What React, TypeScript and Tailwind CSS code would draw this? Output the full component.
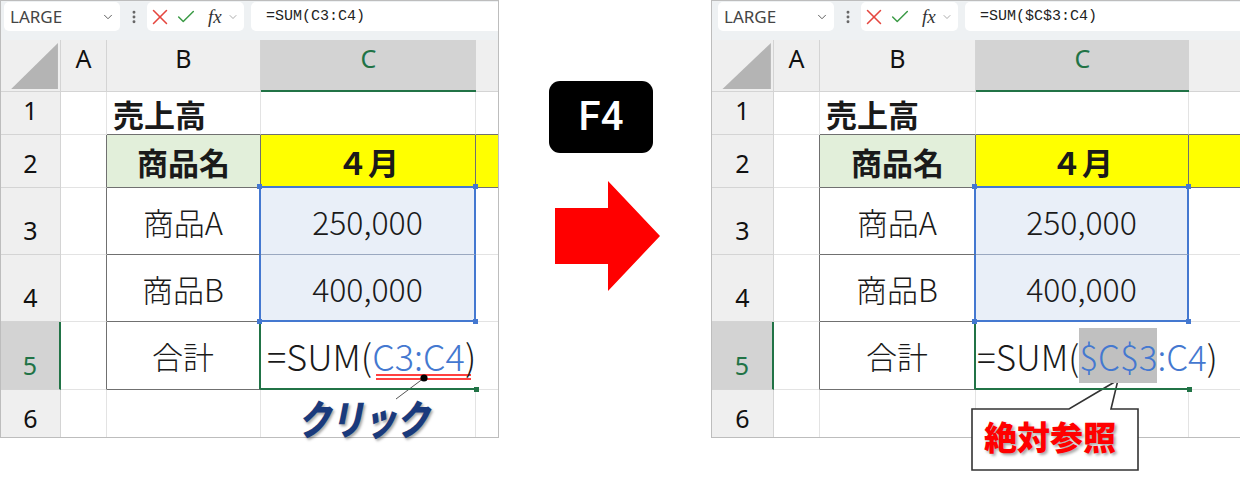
import type { ReactNode } from 'react'
import { X, Check, ChevronDown, EllipsisVertical } from 'lucide-react'

const jp = "font-['Noto_Sans_CJK_JP',sans-serif]"
const head = "font-['Noto_Sans',sans-serif]"

function FormulaBar({ formula, nameOffset }: { formula: string; nameOffset: string }) {
  return (
    <div className="h-[39px] bg-[#eef1f3] flex items-start pt-[1px]">
      <div className={`${nameOffset} w-[116px] h-[29px] bg-white rounded-[5px] flex items-center justify-between pl-[6px] pr-[5px]`}>
        <span className={`${head} text-[17px] text-[#444] leading-none`}>LARGE</span>
        <ChevronDown size={14} strokeWidth={1.6} color="#555" />
      </div>
      <div className="w-[27px] h-[29px] flex items-center justify-center">
        <EllipsisVertical size={16} strokeWidth={2.4} color="#666" />
      </div>
      <div className="w-[97px] h-[29px] bg-white rounded-[5px] flex items-center">
        <X size={26} strokeWidth={1.4} color="#e5463f" />
        <Check size={22} strokeWidth={1.6} color="#3a9a45" className="ml-[2px]" />
        <span className="ml-[11px] font-['Liberation_Serif',serif] italic text-[19px] text-[#333] leading-none">fx</span>
        <ChevronDown size={12} strokeWidth={1.4} color="#888" className="ml-[5px]" />
      </div>
      <div className="flex-1 ml-[7px] h-[29px] bg-white rounded-l-[5px] flex items-center pl-[15px]">
        <span className="font-['Liberation_Mono',monospace] text-[15px] text-[#222] leading-none">{formula}</span>
      </div>
    </div>
  )
}

function ColHead({ children, active }: { children: string; active?: boolean }) {
  return (
    <div
      className={
        active
          ? `${head} bg-[#d3d3d3] border-b-2 border-[#217346] flex justify-center pt-[6px] text-[25px] leading-none text-[#217346]`
          : `${head} bg-[#efefef] border-r border-b border-[#d4d4d4] flex justify-center pt-[6px] text-[25px] leading-none text-[#111]`
      }
    >
      {children}
    </div>
  )
}

function RowHead({ n, active, last }: { n: string; active?: boolean; last?: boolean }) {
  return (
    <div
      className={
        active
          ? `${head} bg-[#d3d3d3] border-r-2 border-r-[#217346] border-b border-b-[#d4d4d4] flex items-end justify-center pb-[11px] text-[25px] leading-none text-[#217346]`
          : last
            ? `${head} bg-[#efefef] border-r border-[#d4d4d4] flex items-end justify-center pb-[6px] text-[25px] leading-none text-[#111]`
            : `${head} bg-[#efefef] border-r border-b border-[#d4d4d4] flex items-end justify-center pb-[11px] text-[25px] leading-none text-[#111]`
      }
    >
      {n}
    </div>
  )
}

function Handle({ pos, green }: { pos: string; green?: boolean }) {
  return <span className={`absolute z-10 w-[5px] h-[5px] ${green ? 'bg-[#217346]' : 'bg-[#4478d0]'} ${pos}`} />
}

function Sheet({ cols, c5, c5Class }: { cols: string; c5: ReactNode; c5Class: string }) {
  const grid = 'border-r border-b border-[#e3e3e3]'
  const text = `${jp} text-[31px] leading-none text-[#1a1a1a] flex items-center`
  return (
    <div className={`grid ${cols} grid-rows-[52px_43px_53px_67px_67px_68px_47px]`}>
      {/* column headers */}
      <div className="bg-[#efefef] border-r border-b border-[#d4d4d4]">
        <svg viewBox="0 0 58 51" className="w-full h-full" preserveAspectRatio="none">
          <polygon points="10,49 56,3 56,49" fill="#b4b4b4" />
        </svg>
      </div>
      <ColHead>A</ColHead>
      <ColHead>B</ColHead>
      <ColHead active>C</ColHead>
      <div className="bg-[#efefef] border-b border-[#d4d4d4]" />

      {/* row 1 */}
      <RowHead n="1" />
      <div className={grid} />
      <div className={`${grid} border-b-[#707070] ${text} font-bold pl-[6px]`}>売上高</div>
      <div className={`${grid} border-b-[#707070]`} />
      <div className="border-b border-[#707070]" />

      {/* row 2 */}
      <RowHead n="2" />
      <div className={`${grid} border-r-[#707070]`} />
      <div className={`border-r border-b border-[#707070] bg-[#e2efda] ${text} justify-center font-bold`}>商品名</div>
      <div className={`border-r border-r-[#707070] border-b-2 border-b-[#4478d0] bg-[#ffff00] ${text} justify-center font-bold pt-[1px]`}>４月</div>
      <div className="border-b border-[#707070] border-l border-l-[#707070] -ml-px bg-[#ffff00]" />

      {/* row 3 */}
      <RowHead n="3" />
      <div className={`${grid} border-r-[#707070]`} />
      <div className={`border-r-2 border-r-[#4478d0] border-b border-b-[#707070] ${text} font-light justify-center`}>商品A</div>
      <div className={`relative border-r-2 border-r-[#4478d0] border-b border-b-[#9aa8c0] bg-[#e9eff8] ${text} font-light text-[32px] justify-center`}>
        <Handle pos="-top-[4px] -left-[4px]" />
        <Handle pos="-top-[4px] -right-[4px]" />
        250,000
      </div>
      <div className={`${grid} border-r-0`} />

      {/* row 4 */}
      <RowHead n="4" />
      <div className={`${grid} border-r-[#707070]`} />
      <div className={`border-r-2 border-r-[#4478d0] border-b border-b-[#707070] ${text} font-light justify-center`}>商品B</div>
      <div className={`relative border-r-2 border-r-[#4478d0] border-b-2 border-b-[#4478d0] bg-[#e9eff8] ${text} font-light text-[32px] justify-center`}>
        <Handle pos="-bottom-[4px] -left-[4px]" />
        <Handle pos="-bottom-[4px] -right-[4px]" />
        400,000
      </div>
      <div className={`${grid} border-r-0`} />

      {/* row 5 */}
      <RowHead n="5" active />
      <div className={`${grid} border-r-[#707070]`} />
      <div className={`border-r-2 border-r-[#217346] border-b border-b-[#707070] ${text} font-light justify-center`}>合計</div>
      <div className={`relative z-10 border-b-2 border-b-[#217346] ${text} font-light ${c5Class} whitespace-nowrap overflow-visible`}>
        <Handle pos="-bottom-[4px] -right-[3px]" green />
        {c5}
      </div>
      <div className={`${grid} border-r-0`} />

      {/* row 6 */}
      <RowHead n="6" last />
      <div className="border-r border-[#e3e3e3]" />
      <div className="border-r border-[#e3e3e3]" />
      <div className="border-r border-[#e3e3e3]" />
      <div />
    </div>
  )
}

export default function App() {
  return (
    <div className="w-[1240px] h-[482px] bg-white flex items-start overflow-hidden">
      {/* before */}
      <div className="relative w-[499px] border border-[#bdbdbd] bg-white">
        <FormulaBar formula="=SUM(C3:C4)" nameOffset="ml-[3px]" />
        <Sheet
          cols="grid-cols-[60px_46px_154px_215px_1fr]"
          c5Class="pl-[6px] text-[36px]"
          c5={
            <span>
              =SUM(<span className="text-[#4478d0]">C3:C4</span>)
            </span>
          }
        />
        <svg className="absolute left-[370px] top-[367px] w-[110px] h-[36px]" viewBox="0 0 110 36">
          <line x1="5" y1="7" x2="100" y2="7" stroke="#ff0000" strokeWidth="1.6" />
          <line x1="5" y1="11" x2="100" y2="11" stroke="#ff0000" strokeWidth="1.6" />
          <line x1="53" y1="10" x2="25" y2="31" stroke="#555" strokeWidth="1" />
          <circle cx="53" cy="10" r="3.6" fill="#000" />
        </svg>
        <div className={`absolute left-[297px] top-[396px] origin-left scale-x-[0.8] ${jp} font-black italic text-[41px] leading-none text-[#1a3a7c] [text-shadow:2px_2px_3px_rgba(0,0,0,0.35)]`}>
          クリック
        </div>
      </div>

      {/* F4 + arrow */}
      <div className="w-[212px] flex flex-col items-start pt-[81px]">
        <div className="ml-[50px] w-[104px] h-[72px] bg-black rounded-[11px] flex items-center justify-center">
          <span className="font-['Roboto',sans-serif] font-medium text-[40px] leading-none text-white">F4</span>
        </div>
        <svg className="ml-[56px] mt-[28px]" width="105" height="110" viewBox="0 0 105 110">
          <polygon points="0,27 53,27 53,0 105,55 53,110 53,83 0,83" fill="#ff0000" />
        </svg>
      </div>

      {/* after */}
      <div className="relative w-[529px] border border-[#bdbdbd] border-r-0 bg-white">
        <FormulaBar formula="=SUM($C$3:C4)" nameOffset="ml-[6px]" />
        <Sheet
          cols="grid-cols-[62px_46px_156px_213px_1fr]"
          c5Class="pl-[1px] text-[35px]"
          c5={
            <span>
              =SUM(<span className="bg-[#c0c0c0] text-[#4478d0] py-[2px]">$C$3</span>
              <span className="text-[#4478d0]">:C4</span>)
            </span>
          }
        />
        <svg className="absolute left-[259px] top-[377px] w-[170px] h-[95px]" viewBox="0 0 170 95">
          <path d="M1 31 L98 31 L147 2 L140 31 L167 31 L167 92 L1 92 Z" fill="#fff" stroke="#333" strokeWidth="1.6" strokeLinejoin="miter" />
        </svg>
        <div className={`absolute left-[272px] top-[419px] ${jp} font-black text-[33px] leading-none text-[#ff0000] [text-shadow:2px_2px_3px_rgba(0,0,0,0.35)]`}>
          絶対参照
        </div>
      </div>
    </div>
  )
}
